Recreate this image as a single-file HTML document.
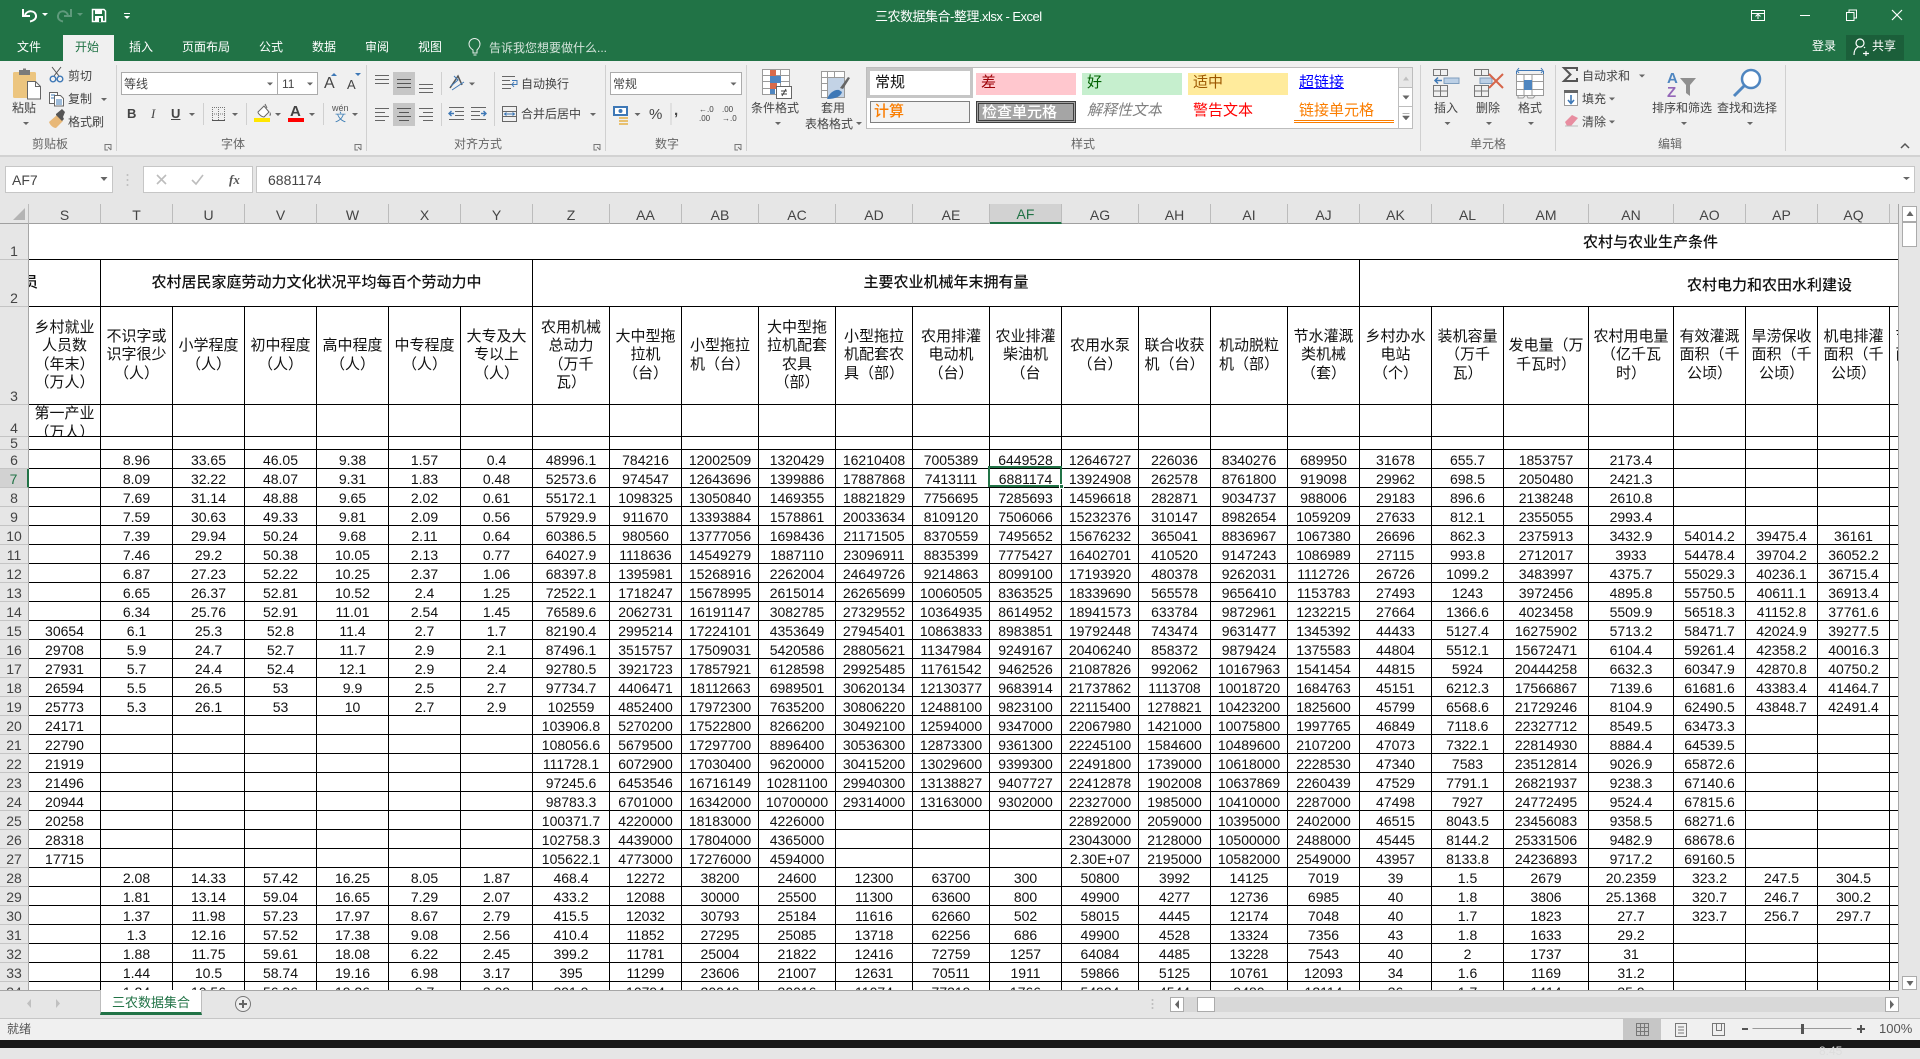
<!DOCTYPE html>
<html lang="zh"><head><meta charset="utf-8"><title>三农数据集合-整理.xlsx - Excel</title>
<style>
*{box-sizing:border-box}
html,body{margin:0;padding:0;width:1920px;height:1048px;overflow:hidden;background:#e6e6e6;font-family:"Liberation Sans","Noto Sans CJK SC",sans-serif}
.b{position:absolute}
.t{position:absolute;white-space:nowrap;font-size:12px;line-height:16px;color:#444}
.w{color:#fff}
.tb{font-size:12px}
#wrap{position:absolute;left:0;top:204px;width:1898px;height:786px;overflow:hidden;background:#fff}
table{border-collapse:separate;border-spacing:0;table-layout:fixed;width:1962px;font-size:14px;color:#111}
td{border-right:1px solid #000;border-bottom:1px solid #000;padding:2px 0 0;height:19px;line-height:16px;text-align:center;vertical-align:bottom;white-space:nowrap;overflow:hidden;background:#fff}
td.h{background:#e6e6e6;border-right:1px solid #a6a6a6;border-bottom:1px solid #c4c4c4;color:#444;font-size:14px}
td.c{background:#e6e6e6;border-right:1px solid #bcbcbc;border-bottom:1px solid #a0a0a0;color:#444;font-size:14px}
td.c.s{background:#d2d2d2;border-bottom:2px solid #217346;color:#217346}
td.h.s{background:#d2d2d2;border-right:2px solid #217346;color:#217346}
tr.r3 td:not(.h){font-size:15px;line-height:18.5px;vertical-align:middle;padding:0}
tr.r2 td:not(.h){font-size:15px;vertical-align:middle;padding:0;font-weight:500}
tr.r4 td{padding:0}
tr.r5 td{padding:0;height:13px;line-height:12px}
.s4{height:31px;overflow:hidden;font-size:15px;line-height:18.5px;color:#111}
.gal{position:absolute;font-size:15px;line-height:20px;white-space:nowrap;overflow:hidden}
svg{position:absolute;left:0;top:0}
</style></head><body>
<div class="b" style="left:0;top:0;width:1920px;height:61px;background:#217346"></div>
<div class="b" style="left:0;top:61px;width:1920px;height:94px;background:#f0f0f0"></div>
<div class="b" style="left:0;top:155px;width:1920px;height:2px;background:#d2d2d2"></div>
<div class="b" style="left:63px;top:35px;width:51px;height:26px;background:#f0f0f0"></div>
<div class="b" style="left:1846px;top:35px;width:58px;height:25px;background:#1b5f3a"></div>

<div class="t w" style="left:875px;top:9px;font-size:13px;color:#fff;letter-spacing:-.5px">三农数据集合-整理.xlsx - Excel</div>
<div class="t w" style="left:17px;top:39px">文件</div>
<div class="t" style="left:75px;top:39px;color:#217346">开始</div>
<div class="t w" style="left:129px;top:39px">插入</div>
<div class="t w" style="left:182px;top:39px">页面布局</div>
<div class="t w" style="left:259px;top:39px">公式</div>
<div class="t w" style="left:312px;top:39px">数据</div>
<div class="t w" style="left:365px;top:39px">审阅</div>
<div class="t w" style="left:418px;top:39px">视图</div>
<div class="t" style="left:489px;top:40px;color:#d5e4db">告诉我您想要做什么...</div>
<div class="t w" style="left:1812px;top:38px">登录</div>
<div class="t w" style="left:1872px;top:38px">共享</div>

<div class="t" style="left:12px;top:100px">粘贴</div>
<div class="t" style="left:68px;top:68px">剪切</div>
<div class="t" style="left:68px;top:91px">复制</div>
<div class="t" style="left:68px;top:114px">格式刷</div>
<div class="t" style="left:32px;top:136px;color:#666">剪贴板</div>
<div class="t" style="left:221px;top:136px;color:#666">字体</div>
<div class="t" style="left:454px;top:136px;color:#666">对齐方式</div>
<div class="t" style="left:655px;top:136px;color:#666">数字</div>
<div class="t" style="left:1071px;top:136px;color:#666">样式</div>
<div class="t" style="left:1470px;top:136px;color:#666">单元格</div>
<div class="t" style="left:1658px;top:136px;color:#666">编辑</div>

<div class="b" style="left:121px;top:72px;width:157px;height:23px;background:#fff;border:1px solid #ababab"></div>
<div class="b" style="left:277px;top:72px;width:41px;height:23px;background:#fff;border:1px solid #ababab"></div>
<div class="t" style="left:124px;top:76px">等线</div>
<div class="t" style="left:282px;top:76px">11</div>
<div class="t" style="left:324px;top:74px;font-size:16px;line-height:20px">A</div>
<div class="t" style="left:347px;top:77px;font-size:13px">A</div>
<div class="t" style="left:127px;top:106px;font-weight:bold;font-size:13px">B</div>
<div class="t" style="left:151px;top:106px;font-style:italic;font-size:13px;font-family:'Liberation Serif',serif">I</div>
<div class="t" style="left:171px;top:106px;text-decoration:underline;font-size:13px;font-weight:bold">U</div>
<div class="t" style="left:290px;top:103px;font-size:15px;line-height:18px;font-weight:bold">A</div>
<div class="t" style="left:332px;top:103px;font-size:9px;line-height:10px;color:#555">wén</div>
<div class="t" style="left:335px;top:112px;font-size:11px;line-height:12px;color:#3f7fb5">文</div>

<div class="b" style="left:393px;top:72px;width:22px;height:23px;background:#c6c6c6"></div>
<div class="b" style="left:393px;top:103px;width:22px;height:23px;background:#c6c6c6"></div>
<div class="t" style="left:521px;top:76px">自动换行</div>
<div class="t" style="left:521px;top:106px">合并后居中</div>

<div class="b" style="left:610px;top:72px;width:132px;height:23px;background:#fff;border:1px solid #ababab"></div>
<div class="t" style="left:613px;top:76px">常规</div>
<div class="t" style="left:649px;top:106px;font-size:15px;line-height:18px">%</div>
<div class="t" style="left:674px;top:102px;font-size:15px;line-height:18px;font-weight:bold">,</div>
<div class="t" style="left:699px;top:105px;font-size:8px;line-height:9px">←.0<br>.00</div>
<div class="t" style="left:722px;top:105px;font-size:8px;line-height:9px">.00<br>→.0</div>

<div class="t" style="left:751px;top:100px">条件格式</div>
<div class="t" style="left:821px;top:100px">套用</div>
<div class="t" style="left:805px;top:116px">表格格式</div>

<div class="b" style="left:866px;top:67px;width:533px;height:62px;background:#fff;border:1px solid #bdbdbd"></div>
<div class="b" style="left:867px;top:68px;width:106px;height:30px;border:3px solid #c6c6c6"></div>
<div class="gal" style="left:870px;top:73px;width:100px;height:22px;padding-left:5px;color:#111">常规</div>
<div class="gal" style="left:976px;top:73px;width:100px;height:22px;padding-left:5px;background:#ffc7ce;color:#9c0006">差</div>
<div class="gal" style="left:1082px;top:73px;width:100px;height:22px;padding-left:5px;background:#c6efce;color:#006100">好</div>
<div class="gal" style="left:1188px;top:73px;width:100px;height:22px;padding-left:5px;background:#ffeb9c;color:#9c5700">适中</div>
<div class="gal" style="left:1299px;top:73px;height:22px;color:#0000ff;text-decoration:underline">超链接</div>
<div class="gal" style="left:870px;top:101px;width:100px;height:22px;padding-left:3px;background:#f2f2f2;border:1px solid #7f7f7f;color:#fa7d00;font-weight:500">计算</div>
<div class="gal" style="left:976px;top:101px;width:100px;height:22px;padding-left:3px;background:#a5a5a5;border:3px double #3f3f3f;color:#fff;font-weight:500;line-height:17px">检查单元格</div>
<div class="gal" style="left:1087px;top:101px;height:22px;color:#7f7f7f;font-style:italic">解释性文本</div>
<div class="gal" style="left:1193px;top:101px;height:22px;color:#ff0000">警告文本</div>
<div class="gal" style="left:1299px;top:101px;height:22px;color:#fa7d00">链接单元格</div>

<div class="t" style="left:1434px;top:100px">插入</div>
<div class="t" style="left:1476px;top:100px">删除</div>
<div class="t" style="left:1518px;top:100px">格式</div>
<div class="t" style="left:1582px;top:68px">自动求和</div>
<div class="t" style="left:1582px;top:91px">填充</div>
<div class="t" style="left:1582px;top:114px">清除</div>
<div class="t" style="left:1652px;top:100px">排序和筛选</div>
<div class="t" style="left:1717px;top:100px">查找和选择</div>

<div class="b" style="left:5px;top:166px;width:108px;height:27px;background:#fff;border:1px solid #c6c6c6"></div>
<div class="b" style="left:143px;top:166px;width:110px;height:27px;background:#fff;border:1px solid #c6c6c6"></div>
<div class="b" style="left:256px;top:166px;width:1659px;height:27px;background:#fff;border:1px solid #c6c6c6"></div>
<div class="t" style="left:12px;top:171px;font-size:14px;line-height:18px">AF7</div>
<div class="t" style="left:268px;top:171px;font-size:14px;line-height:18px">6881174</div>
<div class="t" style="left:229px;top:171px;font-size:13px;line-height:18px;font-family:'Liberation Serif',serif;font-style:italic;font-weight:bold;color:#555">fx</div>

<div id="wrap">
<table><colgroup><col style="width:29px"><col style="width:72px"><col style="width:72px"><col style="width:72px"><col style="width:72px"><col style="width:72px"><col style="width:72px"><col style="width:72px"><col style="width:77px"><col style="width:72px"><col style="width:77px"><col style="width:77px"><col style="width:77px"><col style="width:77px"><col style="width:72px"><col style="width:77px"><col style="width:72px"><col style="width:77px"><col style="width:72px"><col style="width:72px"><col style="width:72px"><col style="width:85px"><col style="width:85px"><col style="width:72px"><col style="width:72px"><col style="width:72px"><col style="width:72px"></colgroup>
<tr><td class="c"></td><td class="c">S</td><td class="c">T</td><td class="c">U</td><td class="c">V</td><td class="c">W</td><td class="c">X</td><td class="c">Y</td><td class="c">Z</td><td class="c">AA</td><td class="c">AB</td><td class="c">AC</td><td class="c">AD</td><td class="c">AE</td><td class="c s">AF</td><td class="c">AG</td><td class="c">AH</td><td class="c">AI</td><td class="c">AJ</td><td class="c">AK</td><td class="c">AL</td><td class="c">AM</td><td class="c">AN</td><td class="c">AO</td><td class="c">AP</td><td class="c">AQ</td><td class="c"></td></tr>
<tr style="height:36px"><td class="h" style="height:36px">1</td><td colspan="26" style="height:36px;border-right:0"></td></tr>
<tr class="r2" style="height:47px"><td class="h" style="height:47px">2</td><td style="height:47px;text-align:left"><span style="display:inline-block;margin-left:-6px">员</span></td><td colspan="6" style="height:47px">农村居民家庭劳动力文化状况平均每百个劳动力中</td><td colspan="11" style="height:47px">主要农业机械年末拥有量</td><td colspan="8" style="height:47px;border-right:0"></td></tr>
<tr class="r3" style="height:98px"><td class="h" style="height:98px">3</td><td style="height:98px">乡村就业<br>人员数<br>（年末）<br>（万人）</td><td>不识字或<br>识字很少<br>（人）</td><td>小学程度<br>（人）</td><td>初中程度<br>（人）</td><td>高中程度<br>（人）</td><td>中专程度<br>（人）</td><td>大专及大<br>专以上<br>（人）</td><td>农用机械<br>总动力<br>（万千<br>瓦）</td><td>大中型拖<br>拉机<br>（台）</td><td>小型拖拉<br>机（台）</td><td>大中型拖<br>拉机配套<br>农具<br>（部）</td><td>小型拖拉<br>机配套农<br>具（部）</td><td>农用排灌<br>电动机<br>（台）</td><td>农业排灌<br>柴油机<br>（台</td><td>农用水泵<br>（台）</td><td>联合收获<br>机（台）</td><td>机动脱粒<br>机（部）</td><td>节水灌溉<br>类机械<br>（套）</td><td>乡村办水<br>电站<br>（个）</td><td>装机容量<br>（万千<br>瓦）</td><td>发电量（万<br>千瓦时）</td><td>农村用电量<br>（亿千瓦<br>时）</td><td>有效灌溉<br>面积（千<br>公顷）</td><td>旱涝保收<br>面积（千<br>公顷）</td><td>机电排灌<br>面积（千<br>公顷）</td><td>节水灌溉<br>面积（千<br>公顷）</td></tr>
<tr class="r4" style="height:32px"><td class="h" style="height:32px">4</td><td style="height:32px;vertical-align:top"><div class="s4">第一产业<br>（万人）</div></td><td></td><td></td><td></td><td></td><td></td><td></td><td></td><td></td><td></td><td></td><td></td><td></td><td></td><td></td><td></td><td></td><td></td><td></td><td></td><td></td><td></td><td></td><td></td><td></td><td></td></tr>
<tr class="r5"><td class="h">5</td><td></td><td></td><td></td><td></td><td></td><td></td><td></td><td></td><td></td><td></td><td></td><td></td><td></td><td></td><td></td><td></td><td></td><td></td><td></td><td></td><td></td><td></td><td></td><td></td><td></td><td></td></tr>
<tr><td class="h">6</td><td></td><td>8.96</td><td>33.65</td><td>46.05</td><td>9.38</td><td>1.57</td><td>0.4</td><td>48996.1</td><td>784216</td><td>12002509</td><td>1320429</td><td>16210408</td><td>7005389</td><td>6449528</td><td>12646727</td><td>226036</td><td>8340276</td><td>689950</td><td>31678</td><td>655.7</td><td>1853757</td><td>2173.4</td><td></td><td></td><td></td><td></td></tr>
<tr><td class="h s">7</td><td></td><td>8.09</td><td>32.22</td><td>48.07</td><td>9.31</td><td>1.83</td><td>0.48</td><td>52573.6</td><td>974547</td><td>12643696</td><td>1399886</td><td>17887868</td><td>7413111</td><td>6881174</td><td>13924908</td><td>262578</td><td>8761800</td><td>919098</td><td>29962</td><td>698.5</td><td>2050480</td><td>2421.3</td><td></td><td></td><td></td><td></td></tr>
<tr><td class="h">8</td><td></td><td>7.69</td><td>31.14</td><td>48.88</td><td>9.65</td><td>2.02</td><td>0.61</td><td>55172.1</td><td>1098325</td><td>13050840</td><td>1469355</td><td>18821829</td><td>7756695</td><td>7285693</td><td>14596618</td><td>282871</td><td>9034737</td><td>988006</td><td>29183</td><td>896.6</td><td>2138248</td><td>2610.8</td><td></td><td></td><td></td><td></td></tr>
<tr><td class="h">9</td><td></td><td>7.59</td><td>30.63</td><td>49.33</td><td>9.81</td><td>2.09</td><td>0.56</td><td>57929.9</td><td>911670</td><td>13393884</td><td>1578861</td><td>20033634</td><td>8109120</td><td>7506066</td><td>15232376</td><td>310147</td><td>8982654</td><td>1059209</td><td>27633</td><td>812.1</td><td>2355055</td><td>2993.4</td><td></td><td></td><td></td><td></td></tr>
<tr><td class="h">10</td><td></td><td>7.39</td><td>29.94</td><td>50.24</td><td>9.68</td><td>2.11</td><td>0.64</td><td>60386.5</td><td>980560</td><td>13777056</td><td>1698436</td><td>21171505</td><td>8370559</td><td>7495652</td><td>15676232</td><td>365041</td><td>8836967</td><td>1067380</td><td>26696</td><td>862.3</td><td>2375913</td><td>3432.9</td><td>54014.2</td><td>39475.4</td><td>36161</td><td></td></tr>
<tr><td class="h">11</td><td></td><td>7.46</td><td>29.2</td><td>50.38</td><td>10.05</td><td>2.13</td><td>0.77</td><td>64027.9</td><td>1118636</td><td>14549279</td><td>1887110</td><td>23096911</td><td>8835399</td><td>7775427</td><td>16402701</td><td>410520</td><td>9147243</td><td>1086989</td><td>27115</td><td>993.8</td><td>2712017</td><td>3933</td><td>54478.4</td><td>39704.2</td><td>36052.2</td><td></td></tr>
<tr><td class="h">12</td><td></td><td>6.87</td><td>27.23</td><td>52.22</td><td>10.25</td><td>2.37</td><td>1.06</td><td>68397.8</td><td>1395981</td><td>15268916</td><td>2262004</td><td>24649726</td><td>9214863</td><td>8099100</td><td>17193920</td><td>480378</td><td>9262031</td><td>1112726</td><td>26726</td><td>1099.2</td><td>3483997</td><td>4375.7</td><td>55029.3</td><td>40236.1</td><td>36715.4</td><td></td></tr>
<tr><td class="h">13</td><td></td><td>6.65</td><td>26.37</td><td>52.81</td><td>10.52</td><td>2.4</td><td>1.25</td><td>72522.1</td><td>1718247</td><td>15678995</td><td>2615014</td><td>26265699</td><td>10060505</td><td>8363525</td><td>18339690</td><td>565578</td><td>9656410</td><td>1153783</td><td>27493</td><td>1243</td><td>3972456</td><td>4895.8</td><td>55750.5</td><td>40611.1</td><td>36913.4</td><td></td></tr>
<tr><td class="h">14</td><td></td><td>6.34</td><td>25.76</td><td>52.91</td><td>11.01</td><td>2.54</td><td>1.45</td><td>76589.6</td><td>2062731</td><td>16191147</td><td>3082785</td><td>27329552</td><td>10364935</td><td>8614952</td><td>18941573</td><td>633784</td><td>9872961</td><td>1232215</td><td>27664</td><td>1366.6</td><td>4023458</td><td>5509.9</td><td>56518.3</td><td>41152.8</td><td>37761.6</td><td></td></tr>
<tr><td class="h">15</td><td>30654</td><td>6.1</td><td>25.3</td><td>52.8</td><td>11.4</td><td>2.7</td><td>1.7</td><td>82190.4</td><td>2995214</td><td>17224101</td><td>4353649</td><td>27945401</td><td>10863833</td><td>8983851</td><td>19792448</td><td>743474</td><td>9631477</td><td>1345392</td><td>44433</td><td>5127.4</td><td>16275902</td><td>5713.2</td><td>58471.7</td><td>42024.9</td><td>39277.5</td><td></td></tr>
<tr><td class="h">16</td><td>29708</td><td>5.9</td><td>24.7</td><td>52.7</td><td>11.7</td><td>2.9</td><td>2.1</td><td>87496.1</td><td>3515757</td><td>17509031</td><td>5420586</td><td>28805621</td><td>11347984</td><td>9249167</td><td>20406240</td><td>858372</td><td>9879424</td><td>1375583</td><td>44804</td><td>5512.1</td><td>15672471</td><td>6104.4</td><td>59261.4</td><td>42358.2</td><td>40016.3</td><td></td></tr>
<tr><td class="h">17</td><td>27931</td><td>5.7</td><td>24.4</td><td>52.4</td><td>12.1</td><td>2.9</td><td>2.4</td><td>92780.5</td><td>3921723</td><td>17857921</td><td>6128598</td><td>29925485</td><td>11761542</td><td>9462526</td><td>21087826</td><td>992062</td><td>10167963</td><td>1541454</td><td>44815</td><td>5924</td><td>20444258</td><td>6632.3</td><td>60347.9</td><td>42870.8</td><td>40750.2</td><td></td></tr>
<tr><td class="h">18</td><td>26594</td><td>5.5</td><td>26.5</td><td>53</td><td>9.9</td><td>2.5</td><td>2.7</td><td>97734.7</td><td>4406471</td><td>18112663</td><td>6989501</td><td>30620134</td><td>12130377</td><td>9683914</td><td>21737862</td><td>1113708</td><td>10018720</td><td>1684763</td><td>45151</td><td>6212.3</td><td>17566867</td><td>7139.6</td><td>61681.6</td><td>43383.4</td><td>41464.7</td><td></td></tr>
<tr><td class="h">19</td><td>25773</td><td>5.3</td><td>26.1</td><td>53</td><td>10</td><td>2.7</td><td>2.9</td><td>102559</td><td>4852400</td><td>17972300</td><td>7635200</td><td>30806220</td><td>12488100</td><td>9823100</td><td>22115400</td><td>1278821</td><td>10423200</td><td>1825600</td><td>45799</td><td>6568.6</td><td>21729246</td><td>8104.9</td><td>62490.5</td><td>43848.7</td><td>42491.4</td><td></td></tr>
<tr><td class="h">20</td><td>24171</td><td></td><td></td><td></td><td></td><td></td><td></td><td>103906.8</td><td>5270200</td><td>17522800</td><td>8266200</td><td>30492100</td><td>12594000</td><td>9347000</td><td>22067980</td><td>1421000</td><td>10075800</td><td>1997765</td><td>46849</td><td>7118.6</td><td>22327712</td><td>8549.5</td><td>63473.3</td><td></td><td></td><td></td></tr>
<tr><td class="h">21</td><td>22790</td><td></td><td></td><td></td><td></td><td></td><td></td><td>108056.6</td><td>5679500</td><td>17297700</td><td>8896400</td><td>30536300</td><td>12873300</td><td>9361300</td><td>22245100</td><td>1584600</td><td>10489600</td><td>2107200</td><td>47073</td><td>7322.1</td><td>22814930</td><td>8884.4</td><td>64539.5</td><td></td><td></td><td></td></tr>
<tr><td class="h">22</td><td>21919</td><td></td><td></td><td></td><td></td><td></td><td></td><td>111728.1</td><td>6072900</td><td>17030400</td><td>9620000</td><td>30415200</td><td>13029600</td><td>9399300</td><td>22491800</td><td>1739000</td><td>10618000</td><td>2228530</td><td>47340</td><td>7583</td><td>23512814</td><td>9026.9</td><td>65872.6</td><td></td><td></td><td></td></tr>
<tr><td class="h">23</td><td>21496</td><td></td><td></td><td></td><td></td><td></td><td></td><td>97245.6</td><td>6453546</td><td>16716149</td><td>10281100</td><td>29940300</td><td>13138827</td><td>9407727</td><td>22412878</td><td>1902008</td><td>10637869</td><td>2260439</td><td>47529</td><td>7791.1</td><td>26821937</td><td>9238.3</td><td>67140.6</td><td></td><td></td><td></td></tr>
<tr><td class="h">24</td><td>20944</td><td></td><td></td><td></td><td></td><td></td><td></td><td>98783.3</td><td>6701000</td><td>16342000</td><td>10700000</td><td>29314000</td><td>13163000</td><td>9302000</td><td>22327000</td><td>1985000</td><td>10410000</td><td>2287000</td><td>47498</td><td>7927</td><td>24772495</td><td>9524.4</td><td>67815.6</td><td></td><td></td><td></td></tr>
<tr><td class="h">25</td><td>20258</td><td></td><td></td><td></td><td></td><td></td><td></td><td>100371.7</td><td>4220000</td><td>18183000</td><td>4226000</td><td></td><td></td><td></td><td>22892000</td><td>2059000</td><td>10395000</td><td>2402000</td><td>46515</td><td>8043.5</td><td>23456083</td><td>9358.5</td><td>68271.6</td><td></td><td></td><td></td></tr>
<tr><td class="h">26</td><td>28318</td><td></td><td></td><td></td><td></td><td></td><td></td><td>102758.3</td><td>4439000</td><td>17804000</td><td>4365000</td><td></td><td></td><td></td><td>23043000</td><td>2128000</td><td>10500000</td><td>2488000</td><td>45445</td><td>8144.2</td><td>25331506</td><td>9482.9</td><td>68678.6</td><td></td><td></td><td></td></tr>
<tr><td class="h">27</td><td>17715</td><td></td><td></td><td></td><td></td><td></td><td></td><td>105622.1</td><td>4773000</td><td>17276000</td><td>4594000</td><td></td><td></td><td></td><td>2.30E+07</td><td>2195000</td><td>10582000</td><td>2549000</td><td>43957</td><td>8133.8</td><td>24236893</td><td>9717.2</td><td>69160.5</td><td></td><td></td><td></td></tr>
<tr><td class="h">28</td><td></td><td>2.08</td><td>14.33</td><td>57.42</td><td>16.25</td><td>8.05</td><td>1.87</td><td>468.4</td><td>12272</td><td>38200</td><td>24600</td><td>12300</td><td>63700</td><td>300</td><td>50800</td><td>3992</td><td>14125</td><td>7019</td><td>39</td><td>1.5</td><td>2679</td><td>20.2359</td><td>323.2</td><td>247.5</td><td>304.5</td><td></td></tr>
<tr><td class="h">29</td><td></td><td>1.81</td><td>13.14</td><td>59.04</td><td>16.65</td><td>7.29</td><td>2.07</td><td>433.2</td><td>12088</td><td>30000</td><td>25500</td><td>11300</td><td>63600</td><td>800</td><td>49900</td><td>4277</td><td>12736</td><td>6985</td><td>40</td><td>1.8</td><td>3806</td><td>25.1368</td><td>320.7</td><td>246.7</td><td>300.2</td><td></td></tr>
<tr><td class="h">30</td><td></td><td>1.37</td><td>11.98</td><td>57.23</td><td>17.97</td><td>8.67</td><td>2.79</td><td>415.5</td><td>12032</td><td>30793</td><td>25184</td><td>11616</td><td>62660</td><td>502</td><td>58015</td><td>4445</td><td>12174</td><td>7048</td><td>40</td><td>1.7</td><td>1823</td><td>27.7</td><td>323.7</td><td>256.7</td><td>297.7</td><td></td></tr>
<tr><td class="h">31</td><td></td><td>1.3</td><td>12.16</td><td>57.52</td><td>17.38</td><td>9.08</td><td>2.56</td><td>410.4</td><td>11852</td><td>27295</td><td>25085</td><td>13718</td><td>62256</td><td>686</td><td>49900</td><td>4528</td><td>13324</td><td>7356</td><td>43</td><td>1.8</td><td>1633</td><td>29.2</td><td></td><td></td><td></td><td></td></tr>
<tr><td class="h">32</td><td></td><td>1.88</td><td>11.75</td><td>59.61</td><td>18.08</td><td>6.22</td><td>2.45</td><td>399.2</td><td>11781</td><td>25004</td><td>21822</td><td>12416</td><td>72759</td><td>1257</td><td>64084</td><td>4485</td><td>13228</td><td>7543</td><td>40</td><td>2</td><td>1737</td><td>31</td><td></td><td></td><td></td><td></td></tr>
<tr><td class="h">33</td><td></td><td>1.44</td><td>10.5</td><td>58.74</td><td>19.16</td><td>6.98</td><td>3.17</td><td>395</td><td>11299</td><td>23606</td><td>21007</td><td>12631</td><td>70511</td><td>1911</td><td>59866</td><td>5125</td><td>10761</td><td>12093</td><td>34</td><td>1.6</td><td>1169</td><td>31.2</td><td></td><td></td><td></td><td></td></tr>
<tr><td class="h">34</td><td></td><td>1.24</td><td>10.56</td><td>56.36</td><td>19.26</td><td>9.7</td><td>3.09</td><td>391.9</td><td>10794</td><td>20040</td><td>20016</td><td>11074</td><td>77319</td><td>1766</td><td>54924</td><td>4544</td><td>9480</td><td>12114</td><td>36</td><td>1.7</td><td>1414</td><td>35.9</td><td></td><td></td><td></td><td></td></tr>
</table>
<div class="t" style="left:1583px;top:30px;font-size:15px;line-height:18px;color:#111;font-weight:500">农村与农业生产条件</div>
<div class="t" style="left:1687px;top:73px;font-size:15px;line-height:18px;color:#111;font-weight:500">农村电力和农田水利建设</div>
<div class="b" style="left:988px;top:262px;width:74px;height:21px;border:2px solid #217346"></div>
<div class="b" style="left:1059px;top:280px;width:5px;height:5px;background:#217346;border:1px solid #fff"></div>
</div>

<div class="b" style="left:0;top:990px;width:1898px;height:1px;background:#a6a6a6"></div>
<div class="b" style="left:1898px;top:204px;width:22px;height:787px;background:#e6e6e6;border-left:1px solid #a6a6a6"></div>
<div class="b" style="left:1902px;top:206px;width:15px;height:16px;background:#fff;border:1px solid #ababab"></div>
<div class="b" style="left:1902px;top:222px;width:15px;height:25px;background:#fff;border:1px solid #ababab"></div>
<div class="b" style="left:1902px;top:976px;width:15px;height:14px;background:#fff;border:1px solid #ababab"></div>

<div class="b" style="left:0;top:991px;width:1920px;height:27px;background:#e6e6e6"></div>
<div class="b" style="left:100px;top:990px;width:102px;height:25px;background:#fff;border-bottom:3px solid #217346;border-left:1px solid #bdbdbd;border-right:1px solid #bdbdbd"></div>
<div class="t" style="left:112px;top:995px;font-size:13px;color:#217346">三农数据集合</div>
<div class="b" style="left:1184px;top:997px;width:701px;height:15px;background:#d8d8d8"></div>
<div class="b" style="left:1170px;top:997px;width:14px;height:15px;background:#fff;border:1px solid #ababab"></div>
<div class="b" style="left:1885px;top:997px;width:14px;height:15px;background:#fff;border:1px solid #ababab"></div>
<div class="b" style="left:1197px;top:997px;width:18px;height:15px;background:#fff;border:1px solid #ababab"></div>

<div class="b" style="left:0;top:1018px;width:1920px;height:22px;background:#f0f0f0;border-top:1px solid #c6c6c6"></div>
<div class="t" style="left:7px;top:1021px;color:#555">就绪</div>
<div class="b" style="left:1623px;top:1019px;width:38px;height:21px;background:#c6c6c6"></div>
<div class="t" style="left:1879px;top:1021px;font-size:13px;color:#555">100%</div>
<div class="b" style="left:0;top:1040px;width:1920px;height:8px;background:#181818"></div>
<div class="t" style="left:1819px;top:1043px;color:#ddd">8:45</div>

<svg width="1920" height="1048" viewBox="0 0 1920 1048" fill="none">
<!-- QAT -->
<g stroke="#fff" stroke-width="2"><path d="M25 15C27 10 35 10 36 15.500C36.500 19 33 21 30 21.500"/><path d="M23 9V16H30"/></g>
<path d="M42 13h6l-3 3z" fill="#fff"/>
<g stroke="#5f9a7c" stroke-width="2"><path d="M68 15C66 10 59 10 58 15.500C57.500 19 60 21 63 21.500"/><path d="M71 9V16H64"/></g>
<path d="M77 13h6l-3 3z" fill="#5f9a7c"/>
<g stroke="#fff"><path d="M92.500 9.500H104L105.500 11V21.500H92.500Z" stroke-width="1.500"/></g><rect x="95" y="9" width="7" height="5" fill="#fff"/><rect x="95" y="16" width="8" height="6" fill="#fff"/><rect x="99" y="18" width="2" height="4" fill="#217346"/>
<path d="M124 13.500h6" stroke="#fff"/><path d="M124 16h6l-3 3z" fill="#fff"/>
<!-- window -->
<g stroke="#fff"><path d="M1751.500 10.500h13v10h-13zM1751.500 13.500h13M1758 19v-4M1755.500 16.500l2.500-2.500 2.500 2.500"/><path d="M1800 15.500h10"/><path d="M1846.500 12.500h7.500v8h-7.500zM1849 12.500v-2.500h7.500v8h-2.500"/><path d="M1892 10l10 10M1902 10l-10 10" stroke-width="1.200"/></g>
<!-- bulb -->
<g stroke="#e6eee9"><path d="M473 50c-3-2-4-4-4-6a5.500 5.500 0 0 1 11 0c0 2-1 4-3 6v3h-4zM473.500 55h3"/></g>
<!-- share user -->
<g stroke="#fff" stroke-width="1.200"><circle cx="1860" cy="43" r="4"/><path d="M1854 55c0-5 2-7 4-8M1864 47l1 1M1866 51v5M1863 53.500h6"/></g>
<!-- separators -->
<g stroke="#d0d0d0"><path d="M116.500 65V151M366.500 65V151M605.500 65V151M746.500 65V151M1420.500 65V151M1555.500 65V151M1785.500 65V151"/><path d="M203.500 103V125M246.500 103V125M323.500 103V125M441.500 72V95M441.500 103V126M494.500 72V126M671 103V125"/></g>
<!-- launchers -->
<g stroke="#777"><path d="M105 144.500h6M105 144v6h3M111 144v6M108 147l3 3"/><path d="M355 144.500h6M355 144v6h3M361 144v6M358 147l3 3"/><path d="M594 144.500h6M594 144v6h3M600 144v6M597 147l3 3"/><path d="M735 144.500h6M735 144v6h3M741 144v6M738 147l3 3"/></g>
<path d="M1901 148l4-4 4 4" stroke="#555" stroke-width="1.500"/>
<!-- dropdown arrows -->
<g fill="#666"><path d="M23 122h6l-3 3zM101 98h6l-3 3zM267 82.500h6l-3 3zM307 82.500h6l-3 3zM189 113h6l-3 3zM232 113h6l-3 3zM275 113h6l-3 3zM309 113h6l-3 3zM352 113h6l-3 3zM469 82.500h6l-3 3zM590 113h6l-3 3zM634.500 113h6l-3 3zM730.500 82.500h6l-3 3zM775 122h6l-3 3zM856 122h6l-3 3zM1444.500 122h6l-3 3zM1486 122h6l-3 3zM1528 122h6l-3 3zM1639 74.500h6l-3 3zM1609 97.500h6l-3 3zM1609 120.500h6l-3 3zM1681 122h6l-3 3zM1747 122h6l-3 3zM100.500 177h7l-3.500 4zM1903 177l3.500 3 3.500-3"/></g>
<!-- paste -->
<rect x="13" y="72" width="23" height="26" rx="1.500" fill="#ecc57f"/><rect x="19" y="70" width="11" height="5" fill="#7a7a7a"/><rect x="23" y="68.500" width="3" height="3" fill="#7a7a7a"/><path d="M27.500 81.500h8l5 5v12.500h-13z" fill="#fff" stroke="#666"/><path d="M35.500 81.500v5h5" stroke="#666"/>
<!-- scissors -->
<g stroke="#555"><path d="M52 67l7 9M61 67l-7 9"/></g><g stroke="#3e78b6" stroke-width="1.400"><circle cx="53" cy="79" r="2.800"/><circle cx="60" cy="79" r="2.800"/></g>
<!-- copy -->
<g stroke="#666" fill="#fff"><path d="M49.500 92.500h8v11h-8z"/><path d="M54.500 95.500h6l3 3v7.500h-9z"/></g><path d="M51 95h4M51 98h3M56 100h6M56 102h6M56 104h6" stroke="#3e78b6"/>
<!-- brush -->
<path d="M49 122l8-7 6 6-7 7c-3 0-6-3-7-6z" fill="#e8b878"/><path d="M56 114l6-5 3 3-2 5 1 2-2 2-6-6z" fill="#555"/>
<!-- font controls -->
<path d="M334 73l3 3h-6z" fill="#3e78b6"/><path d="M355 73h6l-3 3z" fill="#3e78b6"/>
<!-- borders icon -->
<g stroke="#777" stroke-dasharray="1 1"><path d="M212 107.500h13M212 114h13M212 120.500h13M212.500 107v14M218.500 107v14M224.500 107v14"/></g><path d="M212 120.500h13" stroke="#555"/>
<!-- fill -->
<path d="M258 112l6-6 5 6-5 5c-2 0-6-3-6-5z" stroke="#666" fill="#fff"/><path d="M265 104l2 4" stroke="#666"/><path d="M270 112c1.500 2 1 4-.5 4z" fill="#666"/>
<rect x="254" y="118" width="16" height="4" fill="#ffe600"/><rect x="288" y="118" width="16" height="4" fill="#f00"/>
<!-- align rows -->
<g stroke="#666"><path d="M375 75.500h14M375 79.500h14M375 83.500h14"/><path d="M397 79.500h14M397 83.500h14M397 87.500h14" stroke="#555"/><path d="M419 84.500h14M419 88.500h14M419 92.500h14"/>
<path d="M375 108.500h14M375 112.500h10M375 116.500h14M375 120.500h10"/><path d="M397 108.500h14M399 112.500h10M397 116.500h14M399 120.500h10" stroke="#555"/><path d="M419 108.500h14M423 112.500h10M419 116.500h14M423 120.500h10"/></g>
<!-- orientation -->
<path d="M450 88l8-12 4 9" stroke="#555" stroke-width="1.500"/><path d="M454 76l4 4-7 6M452 90l12-8" stroke="#3e78b6"/>
<!-- wrap -->
<g stroke="#666"><path d="M502 76.500h13M502 80.500h8M502 84.500h13M502 88.500h9"/></g><path d="M512 80.500h5v4h-4M514 82l-2 2.500 2 2.500" stroke="#3e78b6"/>
<!-- indent -->
<g stroke="#666"><path d="M449 107.500h15M455 111.500h9M455 115.500h9M449 119.500h15"/><path d="M471 107.500h15M471 111.500h9M471 115.500h9M471 119.500h15"/></g><path d="M449 113.500h5M451.500 111l-2.500 2.500 2.500 2.500M481 113.500h5M483.500 111l2.500 2.500-2.500 2.500" stroke="#3e78b6" stroke-width="1.400"/>
<!-- merge -->
<g stroke="#666"><path d="M502.500 106.500h14v15h-14zM502.500 111.500h14M502.500 116.500h14"/></g><path d="M505 114h9M506.500 112.500l-2 1.500 2 1.500M512.500 112.500l2 1.500-2 1.500" stroke="#3e78b6"/>
<!-- currency -->
<rect x="613" y="106" width="15" height="10" fill="#3e78b6"/><rect x="615" y="108" width="11" height="6" fill="#fff"/><circle cx="620.500" cy="111" r="2" fill="#3e78b6"/><g fill="#e8c070"><rect x="619" y="117" width="9" height="2"/><rect x="619" y="120" width="9" height="2"/><rect x="619" y="123" width="9" height="2"/></g>
<!-- cond format -->
<g stroke="#9a9a9a" fill="#fff"><rect x="762.500" y="69.500" width="27" height="25"/><path d="M771.500 69.500v25M780.500 69.500v25M762.500 75.500h27M762.500 81.500h27M762.500 88.500h27"/></g>
<rect x="770" y="70" width="6" height="6" fill="#d96b4a"/><rect x="770" y="76" width="11" height="7" fill="#4f86c0"/><rect x="770" y="83" width="7" height="6" fill="#d96b4a"/><rect x="770" y="89" width="5" height="5" fill="#4f86c0"/>
<rect x="776.500" y="86.500" width="15" height="12" fill="#fff" stroke="#666"/><path d="M781 91h6M781 94h6M786 89l-4 7" stroke="#444"/>
<!-- table format -->
<g stroke="#9a9a9a"><rect x="821.500" y="71.500" width="23" height="26" fill="#fff"/><path d="M827.500 71.500v26M834.500 71.500v26M821.500 77.500h23M821.500 83.500h23M821.500 90.500h23"/></g><rect x="828" y="78" width="16" height="19" fill="#c3d3e6"/>
<path d="M840 88l8-11 2 1-7 11z" fill="#666"/><path d="M827 99c2-6 8-10 12-9l3 2c-1 4-6 7-15 7z" fill="#3e78b6"/>
<!-- gallery scroll -->
<g stroke="#bdbdbd" fill="#fff"><rect x="1398.500" y="67.500" width="14" height="20" fill="#e8e8e8"/><rect x="1398.500" y="87.500" width="14" height="19"/><rect x="1398.500" y="106.500" width="14" height="22"/></g>
<path d="M1403 80.500h6l-3-4z" fill="#c0c0c0"/><path d="M1402.500 95.500h7l-3.500 4z" fill="#666"/><path d="M1402.500 113.500h7M1402.500 116h7l-3.500 4z" stroke="#666" stroke-width=".5" fill="#666"/>
<path d="M1294 120.500h100M1294 122.500h100" stroke="#fa7d00"/>
<!-- insert -->
<g stroke="#777"><path d="M1433.500 69.500h14v6h-14zM1440.500 69.500v6M1433.500 85.500h14v11h-14zM1433.500 91h14M1440.500 85.500v11"/></g><rect x="1444" y="78" width="15" height="5.500" fill="#bcd0e6" stroke="#7f9ebe"/><path d="M1435 80.500h7M1438 77.500l-3 3 3 3" stroke="#3e78b6" stroke-width="1.500"/>
<!-- delete -->
<g stroke="#777"><path d="M1474.500 69.500h14v6h-14zM1481.500 69.500v6M1474.500 85.500h14v11h-14zM1474.500 91h14M1481.500 85.500v11"/></g><rect x="1480" y="78" width="12" height="5.500" fill="#bcd0e6" stroke="#7f9ebe"/><path d="M1489 74l14 14M1503 74l-14 14" stroke="#d6654a" stroke-width="2"/>
<!-- format -->
<path d="M1516.500 71v4M1543.500 71v4M1518 70.500h24M1519 68l-2 2.500 2 2.500M1541 68l2 2.500-2 2.500" stroke="#3e78b6"/>
<g stroke="#9a9a9a" fill="#fff"><rect x="1516.500" y="74.500" width="27" height="21"/><path d="M1524 74.500v21M1532 74.500v21M1516.500 81.500h27M1516.500 89.500h27"/></g><rect x="1524" y="80" width="8" height="10" fill="#4f86c0"/><path d="M1518 96v2h5l2-2M1527 96l1 2h5l2-2" stroke="#9a9a9a"/>
<!-- sigma -->
<path d="M1577 71v-3h-13l6.500 6.500-6.500 6.500h13v-3" stroke="#555" stroke-width="2"/>
<!-- fill -->
<rect x="1564.500" y="90.500" width="13" height="15" fill="#fff" stroke="#999"/><rect x="1564" y="90" width="14" height="3" fill="#666"/><path d="M1571 95v8M1568 100l3 3.500 3-3.500" stroke="#3e78b6" stroke-width="1.600"/>
<!-- eraser -->
<path d="M1565 122l7-7 6 3-7 8h-4z" fill="#e88da0"/><path d="M1565 126h13" stroke="#bbb"/>
<!-- sort -->
<text x="1667" y="83" font-family="Liberation Sans" font-size="15" font-weight="bold" fill="#4f86c0">A</text><text x="1667" y="97" font-family="Liberation Sans" font-size="15" font-weight="bold" fill="#9467b8">Z</text>
<path d="M1680 78h16l-6 7v11l-4-3v-8z" fill="#8f8f8f"/>
<!-- find -->
<circle cx="1751" cy="79" r="9" stroke="#4f86c0" stroke-width="2.500" fill="#fff"/><path d="M1744 86l-10 10" stroke="#4f86c0" stroke-width="3"/>
<!-- formula bar -->
<g stroke="#bdbdbd" stroke-width="1.600"><path d="M157 175l9 9M166 175l-9 9M192 180l4 4 7-9"/></g><g fill="#bdbdbd"><circle cx="127.500" cy="175" r="1"/><circle cx="127.500" cy="180" r="1"/><circle cx="127.500" cy="185" r="1"/></g>
<!-- select-all -->
<path d="M25 208v12H13z" fill="#b4b4b4"/>
<!-- vertical scroll arrows -->
<path d="M1906.500 216h7l-3.500-5z" fill="#666"/><path d="M1906.500 981h7l-3.500 5z" fill="#666"/>
<!-- sheet nav -->
<path d="M31 999l-4 4.500 4 4.500z" fill="#c0c0c0"/><path d="M56 999l4 4.500-4 4.500z" fill="#c0c0c0"/>
<circle cx="243" cy="1004" r="7.500" stroke="#777" fill="#eee"/><path d="M239 1004h8M243 1000v8" stroke="#666" stroke-width="2"/>
<!-- h scroll -->
<g fill="#bbb"><circle cx="1152.500" cy="1000" r="1"/><circle cx="1152.500" cy="1004" r="1"/><circle cx="1152.500" cy="1008" r="1"/></g>
<path d="M1179 1000l-4 4.500 4 4.500z" fill="#666"/><path d="M1890 1000l4 4.500-4 4.500z" fill="#666"/>
<!-- view icons -->
<g stroke="#777"><path d="M1636.500 1023.500h12v12h-12zM1636.500 1027.500h12M1636.500 1031.500h12M1640.500 1023.500v12M1644.500 1023.500v12"/>
<path d="M1675.500 1023.500h11v13h-11zM1678 1027h6M1678 1030h6M1678 1033h6"/>
<path d="M1712.500 1023.500h12v12h-12zM1716.500 1023.500v7h5v-7"/></g>
<path d="M1742 1029h6M1857 1029h8M1861 1025v8" stroke="#555" stroke-width="2"/><path d="M1752.500 1028.500h99" stroke="#999"/><rect x="1801" y="1024" width="3" height="10" fill="#555"/>
</svg>
</body></html>
